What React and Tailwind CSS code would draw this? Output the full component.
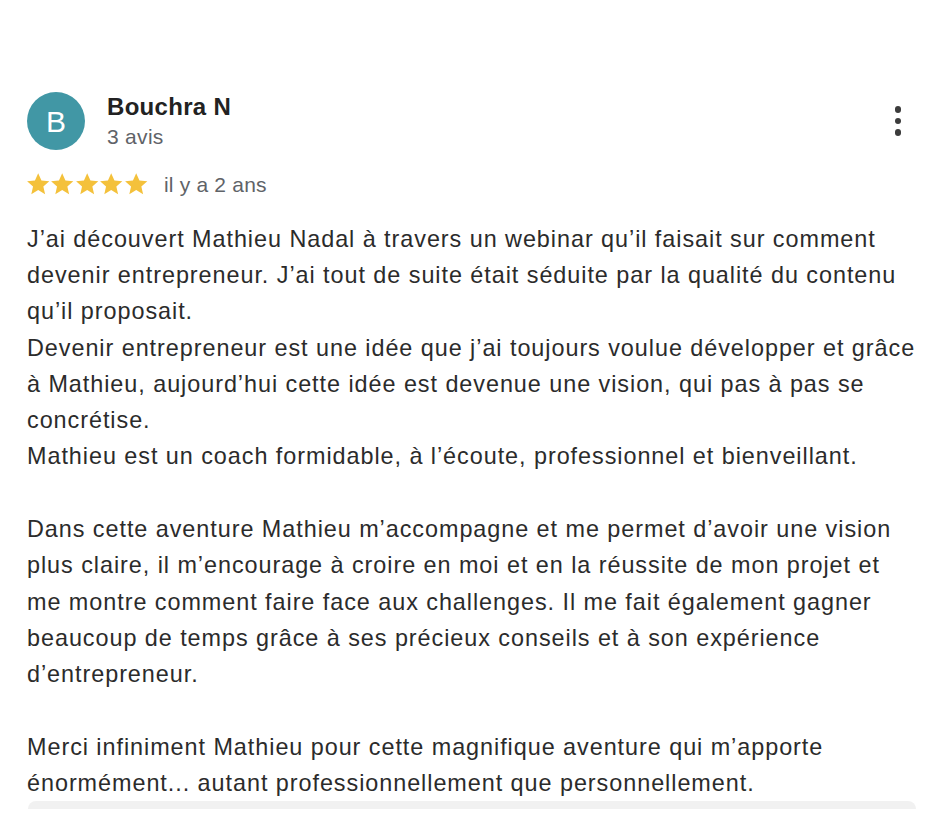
import { useState } from "react"

const Star = () => (
  <svg viewBox="0 0 24 24" className="h-[24px] w-[24.4px]" aria-hidden="true">
    <path
      fill="#f4c13b"
      d="M12 1.2l3.25 7.2 7.85.75-5.95 5.25 1.75 7.8L12 18.1l-6.9 4.1 1.75-7.8L.9 9.15l7.85-.75z"
    />
  </svg>
)

const paragraphs = [
  [
    "J’ai découvert Mathieu Nadal à travers un webinar qu’il faisait sur comment devenir entrepreneur. J’ai tout de suite était séduite par la qualité du contenu qu’il proposait.",
    "Devenir entrepreneur est une idée que j’ai toujours voulue développer et grâce à Mathieu, aujourd’hui cette idée est devenue une vision, qui pas à pas se concrétise.",
    "Mathieu est un coach formidable, à l’écoute, professionnel et bienveillant.",
  ],
  [
    "Dans cette aventure Mathieu m’accompagne et me permet d’avoir une vision plus claire, il m’encourage à croire en moi et en la réussite de mon projet et me montre comment faire face aux challenges. Il me fait également gagner beaucoup de temps grâce à ses précieux conseils et à son expérience d’entrepreneur.",
  ],
  [
    "Merci infiniment Mathieu pour cette magnifique aventure qui m’apporte énormément... autant professionnellement que personnellement.",
  ],
]

const App = () => {
  const [menuOpen, setMenuOpen] = useState(false)

  return (
    <div
      className="min-h-[814px] w-[946px] bg-white text-[#222]"
      style={{ fontFamily: '"Liberation Sans", Arial, sans-serif' }}
    >
      <div className="w-[917px] pl-[27px] pt-[92px]">
        {/* header */}
        <div className="flex items-start">
          <div className="flex h-[58px] w-[58px] shrink-0 items-center justify-center rounded-full bg-[#4197a5] text-[30px] text-white">
            B
          </div>
          <div className="ml-[22px] flex-1">
            <div className="text-[24px] font-bold leading-[30px] tracking-[0.3px] text-[#222]">Bouchra N</div>
            <div className="mt-[2px] text-[21px] leading-[26px] tracking-[0.3px] text-[#5f6368]">3 avis</div>
          </div>
          <button
            className="mr-[16px] mt-[14px] flex flex-col items-center gap-[5px]"
            onClick={() => setMenuOpen(!menuOpen)}
          >
            <span className="h-[6.5px] w-[6.5px] rounded-full bg-[#3c3c3c]" />
            <span className="h-[6.5px] w-[6.5px] rounded-full bg-[#3c3c3c]" />
            <span className="h-[6.5px] w-[6.5px] rounded-full bg-[#3c3c3c]" />
          </button>
        </div>

        {/* rating */}
        <div className="mt-[22px] flex h-[26px] items-center">
          <div className="-ml-[1px] -mt-[3px] flex">
            <Star />
            <Star />
            <Star />
            <Star />
            <Star />
          </div>
          <span className="ml-[16px] text-[21px] leading-[26px] tracking-[0.2px] text-[#5f6368]">il y a 2 ans</span>
        </div>

        {/* text */}
        <div className="mt-[22.7px] text-[23.4px] leading-[36.3px] tracking-[0.95px] text-[#2b2b2b]">
          {paragraphs.map((p, i) => (
            <div key={i} className={i > 0 ? "mt-[36.3px]" : ""}>
              {p.map((line, j) => (
                <p key={j}>{line}</p>
              ))}
            </div>
          ))}
        </div>

        <div className="ml-px h-[8px] w-[888px] rounded-t-full bg-[#f1f1f1]" />
      </div>
    </div>
  )
}

export default App
